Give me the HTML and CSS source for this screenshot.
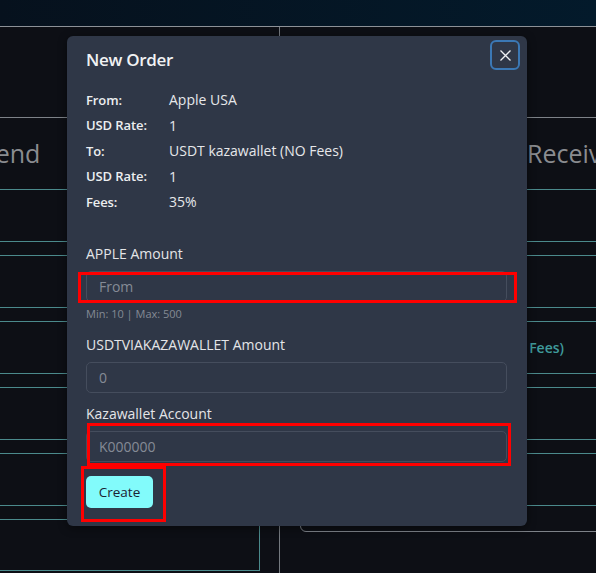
FILE: index.html
```html
<!DOCTYPE html>
<html lang="en">
<head>
<meta charset="utf-8">
<title>New Order</title>
<link rel="stylesheet" href="styles.css">
</head>
<body>
<header class="topbar"></header>
<main class="page">
  <section class="col col-left">
    <div class="panel-head"><h2 class="panel-title title-send">Send</h2></div>
    <div class="slot"></div><div class="bar"></div>
    <div class="slot"></div><div class="bar"></div>
    <div class="slot"></div><div class="bar"></div>
    <div class="slot"></div><div class="bar"></div>
    <div class="slot"></div><div class="bar"></div>
  </section>
  <section class="col col-right">
    <div class="card">
      <div class="panel-head"><h2 class="panel-title title-receive">Receive</h2></div>
      <div class="slot"></div><div class="bar"></div>
      <div class="slot"></div><div class="bar"></div>
      <div class="slot slot-text">USDT kazawallet (NO Fees)</div><div class="bar"></div>
      <div class="slot"></div><div class="bar"></div>
      <div class="slot"></div><div class="bar bar-last"></div>
    </div>
  </section>
</main>

<div class="modal">
  <div class="modal-head">
    <h1 class="modal-title">New Order</h1>
    <button class="close-btn" type="button" aria-label="Close">
      <svg width="11" height="11" viewBox="0 0 11 11"><path d="M0.5 0.5 L10.5 10.5 M10.5 0.5 L0.5 10.5" stroke="#eef0f3" stroke-width="1.3" fill="none"/></svg>
    </button>
  </div>
  <dl class="info">
    <dt>From:</dt><dd>Apple USA</dd>
    <dt>USD Rate:</dt><dd>1</dd>
    <dt>To:</dt><dd>USDT kazawallet (NO Fees)</dd>
    <dt>USD Rate:</dt><dd>1</dd>
    <dt>Fees:</dt><dd>35%</dd>
  </dl>
  <div class="group group-1">
    <label class="field-label">APPLE Amount</label>
    <input class="field" type="text" placeholder="From">
    <div class="hint">Min: 10 | Max: 500</div>
  </div>
  <div class="group group-2">
    <label class="field-label">USDTVIAKAZAWALLET Amount</label>
    <input class="field" type="text" placeholder="0">
  </div>
  <div class="group group-3">
    <label class="field-label">Kazawallet Account</label>
    <input class="field" type="text" placeholder="K000000">
  </div>
  <button class="create-btn" type="button">Create</button>

  <div class="mark mark-1"></div>
  <div class="mark mark-2"></div>
  <div class="mark mark-3"></div>
</div>
</body>
</html>
```

FILE: styles.css
```css
* { box-sizing: border-box; }

html, body {
  margin: 0;
  padding: 0;
}

body {
  width: 596px;
  height: 573px;
  overflow: hidden;
  background: #0d0f15;
  font-family: "Open Sans", "DejaVu Sans", sans-serif;
  position: relative;
}

.topbar {
  height: 27px;
  background: linear-gradient(90deg, #06111d, #031a2b);
  border-bottom: 1px solid #8c9197;
}

.page {
  display: flex;
  align-items: stretch;
  height: 546px;
}

.col-left {
  width: 260px;
  flex: none;
  margin-top: 90px;
  align-self: flex-start;
  border-top: 1px solid #7d8288;
  border-right: 1px solid #4b8a8c;
  border-bottom: 1px solid #4b8a8c;
  padding-bottom: 50px;
}

.col-right {
  flex: none;
  margin-left: 19px;
  border-left: 1px solid #74797f;
  padding-left: 20px;
  padding-top: 90px;
}

.card {
  width: 400px;
  border: 1px solid #7d8288;
  border-radius: 6px;
}

.panel-head {
  height: 72px;
  border-bottom: 1px solid #4b8a8c;
}

.panel-title {
  margin: 0;
  font-size: 25px;
  font-weight: 500;
  line-height: 71px;
  color: #8a8c90;
  white-space: nowrap;
}

.title-send { margin-left: -18px; }
.title-receive { padding-left: 226px; }

.slot { height: 51px; }

.slot-text {
  text-align: right;
  padding-right: 135px;
  line-height: 51px;
  font-size: 14px;
  font-weight: 600;
  color: #3f9a9b;
  white-space: nowrap;
}

.bar {
  height: 15px;
  border-top: 1px solid #4b8a8c;
  border-bottom: 1px solid #4b8a8c;
}

.bar-last {
  height: 26px;
  border-bottom: none;
}

/* Modal */
.modal {
  position: absolute;
  left: 67px;
  top: 36px;
  width: 460px;
  padding: 4px 20px 18px 19px;
  background: #2f3747;
  border-radius: 6px;
  box-shadow: 0 2px 10px rgba(0, 0, 0, 0.45);
  color: #e9eaec;
}

.modal-head {
  display: flex;
  justify-content: space-between;
  align-items: flex-start;
  margin-right: -13px;
}

.modal-title {
  margin: 9px 0 0 0;
  font-size: 17px;
  line-height: 22px;
  font-weight: 600;
  letter-spacing: -0.3px;
  color: #f1f2f4;
}

.close-btn {
  width: 30px;
  height: 30px;
  padding: 0;
  border: 2px solid #3b78b5;
  border-radius: 6px;
  background: #2f3747;
  display: flex;
  align-items: center;
  justify-content: center;
}

.close-btn svg { display: block; }

.info {
  display: grid;
  grid-template-columns: 83px 1fr;
  grid-auto-rows: 25.5px;
  align-items: center;
  margin: 16px 0 0 0;
  font-size: 14px;
}

.info dt {
  font-weight: 600;
  font-size: 13px;
  letter-spacing: -0.1px;
  color: #eceef0;
}

.info dd {
  margin: 0;
  color: #e6e7ea;
  font-weight: 500;
}

.group { display: flex; flex-direction: column; }
.group-1 { margin-top: 29px; }
.group-2 { margin-top: 13px; }
.group-3 { margin-top: 11px; }

.field-label {
  font-size: 14px;
  line-height: 20px;
  font-weight: 500;
  color: #e4e5e8;
  margin-bottom: 7px;
}

.field {
  height: 31px;
  width: 100%;
  border: 1px solid #454d5d;
  border-radius: 5px;
  background: #2f3747;
  padding: 0 12px;
  font-family: "Open Sans", "DejaVu Sans", sans-serif;
  font-size: 14px;
  color: #e6e7ea;
  outline: none;
}

.field::placeholder { color: #858b96; }

.hint {
  margin-top: 4px;
  font-size: 11px;
  line-height: 16px;
  color: #848a94;
}

.create-btn {
  margin-top: 14px;
  height: 32px;
  width: 67px;
  padding: 0;
  border: none;
  border-radius: 5px;
  background: #82fbfb;
  color: #1b2232;
  font-family: "Open Sans", "DejaVu Sans", sans-serif;
  font-size: 13.5px;
  font-weight: 500;
  display: block;
}

/* red annotation outlines over the fields */
.mark {
  position: absolute;
  border: 3px solid #ff0000;
  pointer-events: none;
}

.mark-1 { left: 11px; top: 236px; width: 439px; height: 31px; }
.mark-2 { left: 20px; top: 387px; width: 424px; height: 43px; }
.mark-3 { left: 14px; top: 430px; width: 85px; height: 56px; }
```
